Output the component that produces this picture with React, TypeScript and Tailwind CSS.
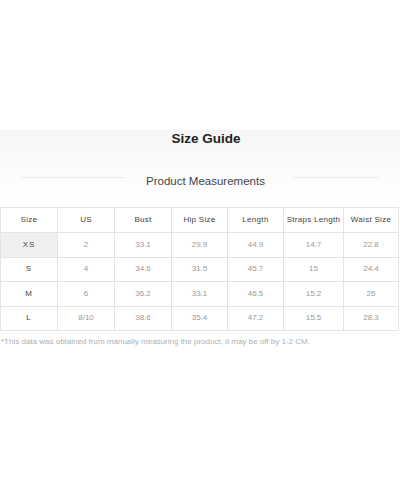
import React from 'react';

const headers = ['Size', 'US', 'Bust', 'Hip Size', 'Length', 'Straps Length', 'Waist Size'];
const widths = ['w-[57px]', 'w-[57px]', 'w-[57px]', 'w-[56px]', 'w-[56px]', 'w-[60px]', 'w-[55px]'];

const rows = [
  ['XS', '2', '33.1', '29.9', '44.9', '14.7', '22.8'],
  ['S', '4', '34.6', '31.5', '45.7', '15', '24.4'],
  ['M', '6', '36.2', '33.1', '46.5', '15.2', '26'],
  ['L', '8/10', '38.6', '35.4', '47.2', '15.5', '28.3'],
];

export default function App() {
  return (
    <div className="w-[400px] h-[480px] bg-white font-['Liberation_Sans',Arial,sans-serif] overflow-hidden">
      <div className="h-[130px]" />
      <div className="bg-gradient-to-b from-[#f6f6f6] to-white h-[70px] flex flex-col">
        <h1 className="pl-[12px] text-center text-[13.5px] leading-[18px] font-bold text-[#222]">Size Guide</h1>
        <div className="mt-[26px] flex items-center">
          <div className="ml-[20px] w-[105px] h-px bg-[#ececec] -mt-[8px]" />
          <span className="ml-[21px] w-[117px] text-center whitespace-nowrap text-[11.5px] leading-[14px] text-[#444]">
            Product Measurements
          </span>
          <div className="ml-[29px] w-[86px] h-px bg-[#ececec] -mt-[8px]" />
        </div>
      </div>
      <table className="mt-[7px] border-collapse table-fixed w-[398px] text-[8px] text-center">
        <thead>
          <tr className="h-[25px]">
            {headers.map((h, i) => (
              <th key={h} className={`${widths[i]} border border-[#e4e4e4] font-normal text-[#444] tracking-[0.3px]`}>
                {h}
              </th>
            ))}
          </tr>
        </thead>
        <tbody>
          {rows.map((r) => (
            <tr key={r[0]} className="h-[24.5px]">
              {r.map((c, i) => (
                <td
                  key={i}
                  className={
                    i === 0
                      ? `border border-[#e4e4e4] text-[#444] tracking-[1px] ${r[0] === 'XS' ? 'bg-[#f0f0f0]' : ''}`
                      : 'border border-[#e4e4e4] text-[#999]'
                  }
                >
                  {c}
                </td>
              ))}
            </tr>
          ))}
        </tbody>
      </table>
      <p className="mt-[6px] text-[8px] leading-[10px] text-[#b0b0b0] pl-[1px]">
        *This data was obtained from manually measuring the product, it may be off by 1-2 CM.
      </p>
    </div>
  );
}
